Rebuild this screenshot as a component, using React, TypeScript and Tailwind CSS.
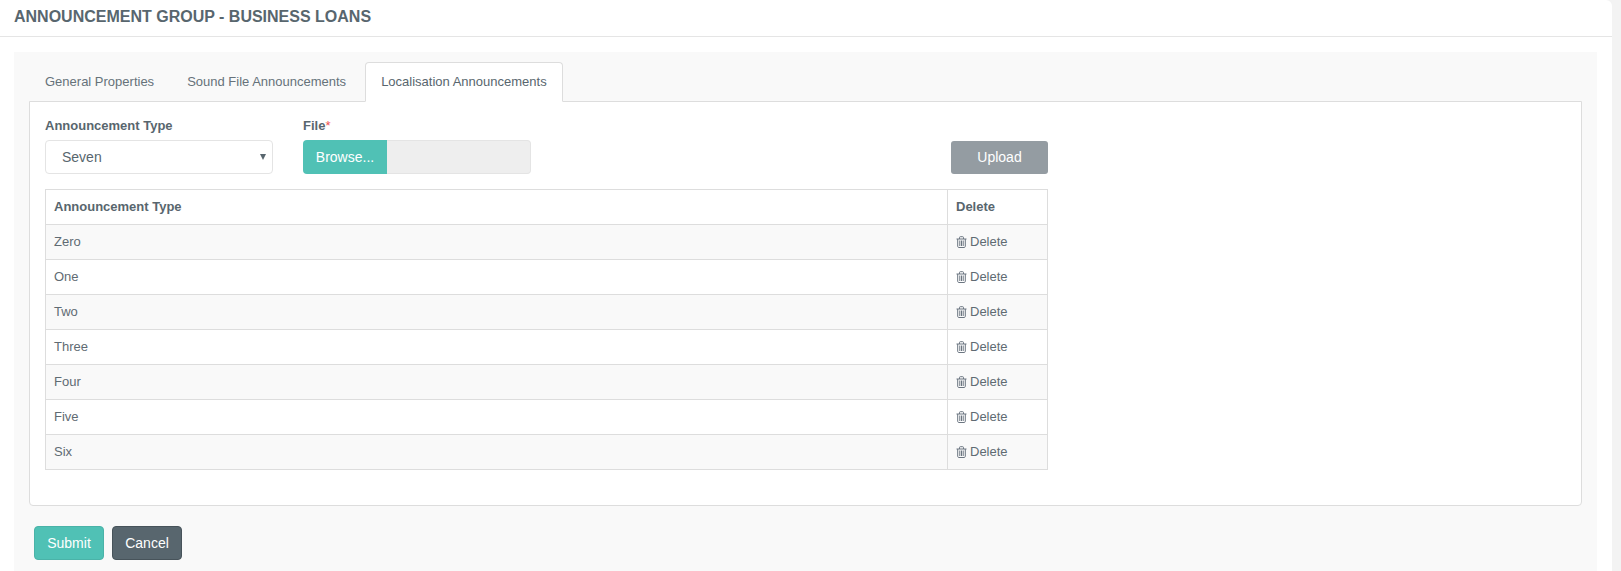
import React from "react";

const ROWS = ["Zero", "One", "Two", "Three", "Four", "Five", "Six"];

const TrashIcon = () => (
  <svg width="11" height="12" viewBox="0 0 11 12" fill="none" stroke="#6b7580" strokeWidth="1" className="shrink-0">
    <path d="M0.5 3H10.5" />
    <path d="M3.5 3V1.5C3.5 1 3.8 0.7 4.3 0.7H6.7C7.2 0.7 7.5 1 7.5 1.5V3" />
    <path d="M1.7 3V10.3C1.7 10.9 2.1 11.5 2.7 11.5H8.3C8.9 11.5 9.3 10.9 9.3 10.3V3" />
    <path d="M3.8 4.5V10M5.5 4.5V10M7.2 4.5V10" />
  </svg>
);

const Tab = ({ label, active, className }: { label: string; active?: boolean; className: string }) => (
  <div
    className={
      active
        ? `h-[40px] -mb-px px-[15px] flex items-center bg-white border border-[#ddd] border-b-white rounded-t-[4px] text-[#58666e] ${className}`
        : `h-[39px] px-[15px] flex items-center border border-transparent text-[#66727a] ${className}`
    }
  >
    {label}
  </div>
);

const Row = ({ name, striped }: { name: string; striped: boolean }) => (
  <div className={`flex h-[35px] border-t border-[#ddd] text-[#5f6b73] ${striped ? "bg-[#f9f9f9]" : "bg-white"}`}>
    <div className="flex-1 flex items-center px-2">{name}</div>
    <div className="w-[100px] border-l border-[#ddd] flex items-center gap-[3px] px-2">
      <TrashIcon />
      Delete
    </div>
  </div>
);

export default function App() {
  return (
    <div className="h-[571px] bg-[#f3f3f3] overflow-hidden font-['Liberation_Sans',Arial,sans-serif] text-[13px]">
      <div className="w-[1612px] h-full bg-white rounded-tr-[6px]">
        <div className="h-[37px] border-b border-[#e5e5e5] px-[14px] pt-[8px] text-[16px] leading-[18px] font-bold text-[#58666e]">
          ANNOUNCEMENT GROUP - BUSINESS LOANS
        </div>
        <div className="ml-[14px] mr-[15px] mt-[15px] h-[519px] bg-[#f9f9f9] px-[15px] pt-[10px]">
          <div className="flex h-[39px]">
            <Tab label="General Properties" className="mr-[1px]" />
            <Tab label="Sound File Announcements" className="mr-[3px]" />
            <Tab label="Localisation Announcements" active className="mr-[3px]" />
          </div>
          <div className="h-[405px] bg-white border border-[#ddd] rounded-b-[4px] px-[15px] pt-[15px]">
            <div className="flex w-[1003px] h-[72px]">
              <div className="w-[228px] mr-[30px]">
                <div className="h-[23px] font-bold text-[#58666e] leading-[17px]">Announcement Type</div>
                <div className="relative h-[34px] border border-[#e4e4e4] rounded-[4px] flex items-center pl-[16px] text-[14px] text-[#58666e]">
                  Seven
                  <span className="absolute right-[6px] top-[13px] w-0 h-0 border-x-[3.5px] border-x-transparent border-t-[6px] border-t-[#58666e]" />
                </div>
              </div>
              <div className="w-[228px]">
                <div className="h-[23px] font-bold text-[#58666e] leading-[17px]">
                  File<span className="text-[#f05050] font-normal">*</span>
                </div>
                <div className="flex h-[34px]">
                  <div className="w-[84px] bg-[#50c1b5] rounded-l-[4px] flex items-center justify-center text-white text-[14px]">
                    Browse...
                  </div>
                  <div className="flex-1 bg-[#eeeeee] border border-[#e4e4e4] border-l-0 rounded-r-[4px]" />
                </div>
              </div>
              <div className="ml-auto mt-[24px] w-[97px] h-[33px] bg-[#949ca2] rounded-[3px] flex items-center justify-center text-white text-[14px]">
                Upload
              </div>
            </div>
            <div className="w-[1003px] border-x border-b border-[#ddd]">
              <div className="flex h-[35px] border-t border-[#ddd] font-bold text-[#58666e]">
                <div className="flex-1 flex items-center px-2">Announcement Type</div>
                <div className="w-[100px] border-l border-[#ddd] flex items-center px-2">Delete</div>
              </div>
              {ROWS.map((name, i) => (
                <Row key={name} name={name} striped={i % 2 === 0} />
              ))}
            </div>
          </div>
          <div className="flex gap-[8px] mt-[20px] ml-[5px]">
            <div className="w-[70px] h-[34px] bg-[#50c1b5] border border-[#4ab3a8] rounded-[4px] flex items-center justify-center text-white text-[14px]">
              Submit
            </div>
            <div className="w-[70px] h-[34px] bg-[#58666e] border border-[#47535a] rounded-[4px] flex items-center justify-center text-white text-[14px]">
              Cancel
            </div>
          </div>
        </div>
      </div>
    </div>
  );
}
